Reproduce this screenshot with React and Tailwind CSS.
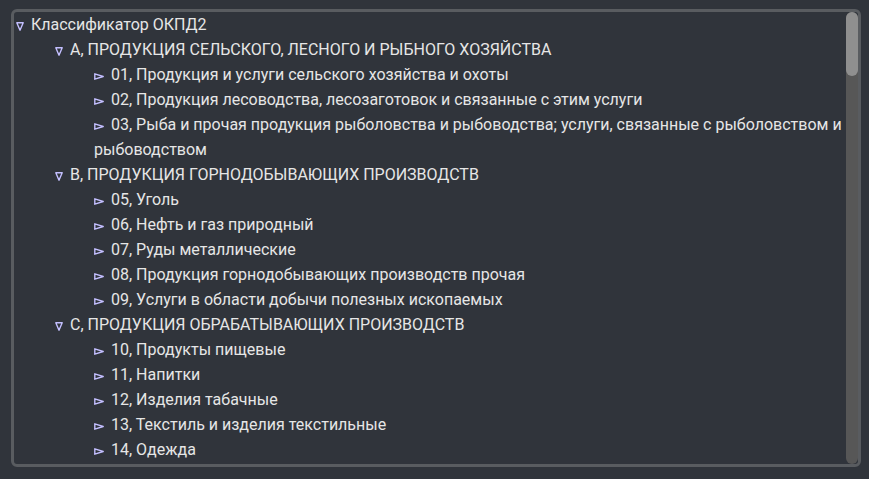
import React from "react";

const tree = [
  {
    code: "A",
    name: "ПРОДУКЦИЯ СЕЛЬСКОГО, ЛЕСНОГО И РЫБНОГО ХОЗЯЙСТВА",
    items: [
      ["01", "Продукция и услуги сельского хозяйства и охоты"],
      ["02", "Продукция лесоводства, лесозаготовок и связанные с этим услуги"],
      ["03", "Рыба и прочая продукция рыболовства и рыбоводства; услуги, связанные с рыболовством и рыбоводством"],
    ],
  },
  {
    code: "B",
    name: "ПРОДУКЦИЯ ГОРНОДОБЫВАЮЩИХ ПРОИЗВОДСТВ",
    items: [
      ["05", "Уголь"],
      ["06", "Нефть и газ природный"],
      ["07", "Руды металлические"],
      ["08", "Продукция горнодобывающих производств прочая"],
      ["09", "Услуги в области добычи полезных ископаемых"],
    ],
  },
  {
    code: "C",
    name: "ПРОДУКЦИЯ ОБРАБАТЫВАЮЩИХ ПРОИЗВОДСТВ",
    items: [
      ["10", "Продукты пищевые"],
      ["11", "Напитки"],
      ["12", "Изделия табачные"],
      ["13", "Текстиль и изделия текстильные"],
      ["14", "Одежда"],
      ["15", "Кожа и изделия из кожи"],
      ["16", "Древесина и изделия из дерева и пробки, кроме мебели; изделия из соломки и материалов для плетения"],
      ["17", "Бумага и изделия из бумаги"],
      ["18", "Услуги печатные и услуги по копированию звуко- и видеозаписей, а также программных средств"],
      ["19", "Кокс и нефтепродукты"],
      ["20", "Вещества химические и продукты химические"],
    ],
  },
];

// hollow triangles used as tree toggles
function Arrow({ open }) {
  if (open) {
    return (
      <svg width="8" height="9" viewBox="0 0 8 9" className="inline-block align-[-1px] mr-[7px]">
        <path d="M0.8 0.8 H7.2 L4 8.2 Z" fill="none" stroke="#c3bfff" strokeWidth="1.4" strokeLinejoin="round" />
      </svg>
    );
  }
  return (
    <svg width="10" height="7" viewBox="0 0 10 7" className="inline-block align-[0px] mr-[7px]">
      <path d="M0.8 0.8 L9.2 3.5 L0.8 6.2 Z" fill="none" stroke="#c3bfff" strokeWidth="1.4" strokeLinejoin="round" />
    </svg>
  );
}

export default function App() {
  return (
    <div className="w-full h-[479px] bg-[#30343b] pt-[9px] pl-[11px] font-['Roboto',sans-serif] text-[16px] leading-[25px] text-[#e6e6e6]">
      <div className="w-[850px] h-[458px] border-[3px] border-[#595c60] rounded-[6px] flex overflow-hidden">
        <div className="flex-1 overflow-hidden pl-[2px]">
          <ul>
            <li>
              <Arrow open />
              Классификатор ОКПД2
              <ul className="pl-[39px]">
                {tree.map((sec) => (
                  <li key={sec.code}>
                    <Arrow open />
                    {sec.code}, {sec.name}
                    <ul className="pl-[39px]">
                      {sec.items.map(([c, n]) => (
                        <li key={c}>
                          <Arrow />
                          {c}, {n}
                        </li>
                      ))}
                    </ul>
                  </li>
                ))}
              </ul>
            </li>
          </ul>
        </div>
        <div className="w-[12px] h-full bg-[#575757] rounded-b-[6px] rounded-t-[6px] flex flex-col">
          <div className="h-[64px] w-full bg-[#8f8f8f] rounded-full" />
        </div>
      </div>
    </div>
  );
}
